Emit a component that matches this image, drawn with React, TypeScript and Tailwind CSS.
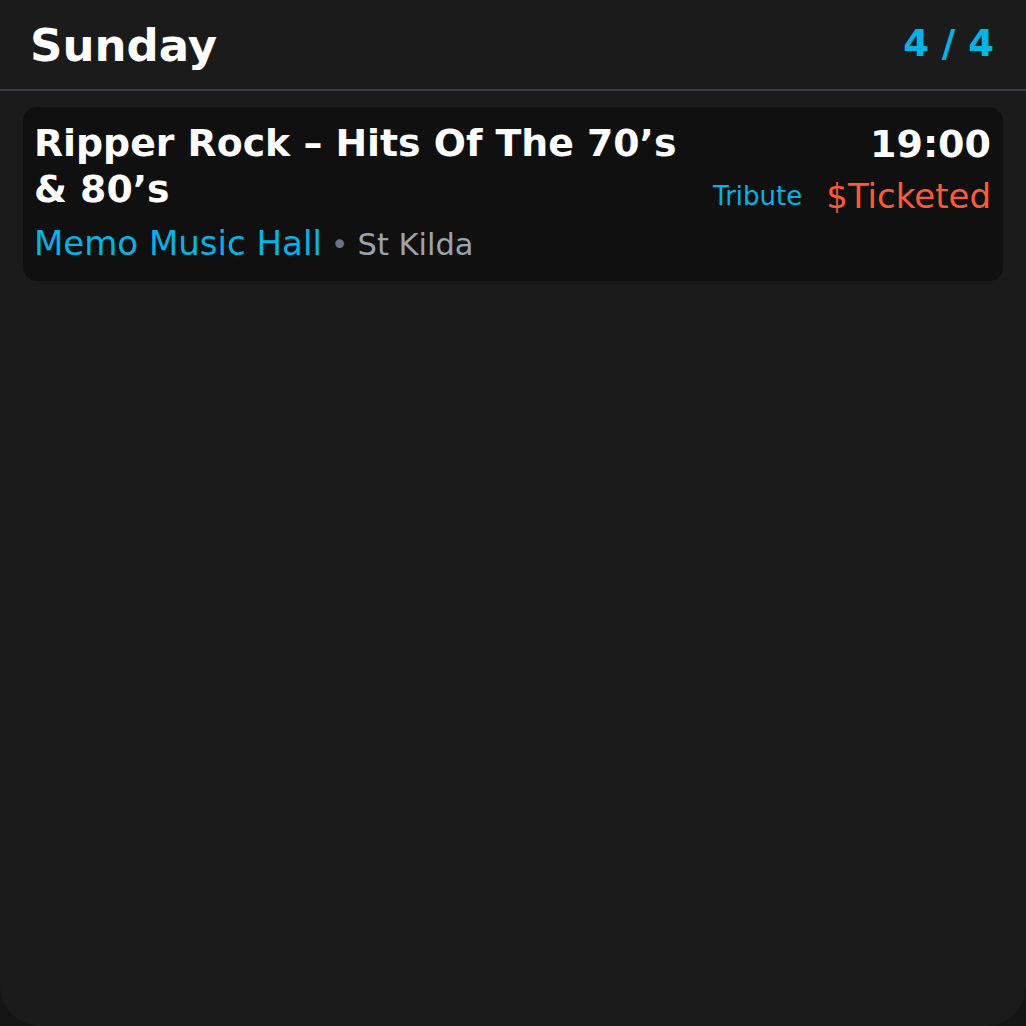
import React from "react";

const font = { fontFamily: '"DejaVu Sans", sans-serif' };

export default function App() {
  return (
    <div className="h-[1026px] w-[1026px] bg-[#151515]" style={font}>
      <div className="flex h-full flex-col rounded-b-[40px] bg-[#1b1b1b]">
        <header className="flex h-[91px] items-center justify-between border-b-2 border-[#3a3e49] pl-[30px] pr-[32px]">
          <h1 className="mt-[2px] text-[45px] font-bold leading-[1.2] text-white">Sunday</h1>
          <span className="text-[37px] font-bold leading-[1.2] text-[#00b4e6]">4 / 4</span>
        </header>
        <div className="px-[23px] pt-[16px]">
          <div className="flex gap-4 rounded-[14px] bg-[#101010] pb-[17px] pl-[11px] pr-3 pt-[13px]">
            <div className="min-w-0 flex-1">
              <div className="text-[37.8px] font-bold leading-[46px] text-white">
                Ripper Rock – Hits Of The 70’s &amp; 80’s
              </div>
              <div className="mt-[11px] flex items-baseline leading-[1.2]">
                <span className="text-[34px] text-[#00b4e6]">Memo Music Hall</span>
                <span className="ml-[9px] text-[30px] text-[#6b7280]">•</span>
                <span className="ml-[9px] text-[30.5px] text-[#9ca3af]">St Kilda</span>
              </div>
            </div>
            <div className="flex shrink-0 flex-col items-end">
              <div className="mt-[1px] text-[38px] font-bold leading-[46px] text-white">19:00</div>
              <div className="mt-[9px] flex items-center gap-6">
                <span className="text-[26px] leading-[1.2] text-[#00b4e6]">Tribute</span>
                <span className="text-[34px] leading-[1.2] text-[#ff5a36]">$Ticketed</span>
              </div>
            </div>
          </div>
        </div>
      </div>
    </div>
  );
}
